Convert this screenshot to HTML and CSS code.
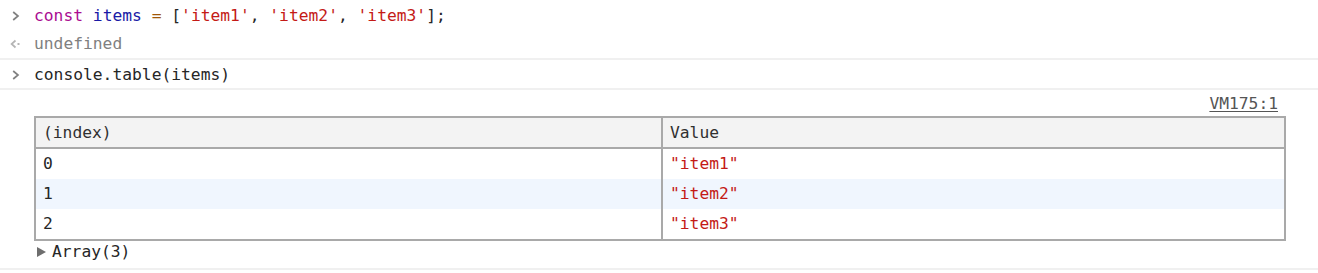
FILE: index.html
```html
<!DOCTYPE html>
<html>
<head>
<meta charset="utf-8">
<link rel="stylesheet" href="styles.css">
</head>
<body>
<div class="console">
  <div class="msg cmd first">
    <span class="gutter"><svg class="prompt" width="8" height="10" viewBox="0 0 8 10"><path d="M1.2 1 L6 5 L1.2 9" fill="none" stroke="#808080" stroke-width="1.7"/></svg></span>
    <span class="code"><span class="kw">const</span> <span class="var">items</span> <span class="op">=</span> [<span class="str">'item1'</span>, <span class="str">'item2'</span>, <span class="str">'item3'</span>];</span>
  </div>
  <div class="msg result">
    <span class="gutter"><svg class="ret" width="12" height="10" viewBox="0 0 12 10"><path d="M5.5 1.5 L1.6 5 L5.5 8.5" fill="none" stroke="#b5b5b5" stroke-width="1.7"/><rect x="7.5" y="4" width="2" height="2" fill="#b5b5b5"/></svg></span>
    <span class="code undef">undefined</span>
  </div>
  <div class="msg cmd second">
    <span class="gutter"><svg class="prompt" width="8" height="10" viewBox="0 0 8 10"><path d="M1.2 1 L6 5 L1.2 9" fill="none" stroke="#808080" stroke-width="1.7"/></svg></span>
    <span class="code">console.table(items)</span>
  </div>
  <div class="msg output">
    <div class="source"><span class="link">VM175:1</span></div>
    <table class="ctable">
      <colgroup><col class="c-index"><col class="c-value"></colgroup>
      <thead>
        <tr><th>(index)</th><th class="sep">Value</th></tr>
      </thead>
      <tbody>
        <tr><td>0</td><td class="sep str">"item1"</td></tr>
        <tr class="hl"><td>1</td><td class="sep str">"item2"</td></tr>
        <tr><td>2</td><td class="sep str">"item3"</td></tr>
      </tbody>
    </table>
    <div class="arr"><span class="tri"></span><span>Array(3)</span></div>
  </div>
</div>
</body>
</html>
```

FILE: styles.css
```css
html, body {
  margin: 0;
  padding: 0;
  background: #ffffff;
}

.console {
  font-family: "DejaVu Sans Mono", "Liberation Mono", monospace;
  font-size: 16.3px;
  line-height: 20px;
  color: #262626;
}

.msg {
  display: flex;
  align-items: center;
}

.gutter {
  width: 34px;
  flex: 0 0 34px;
  display: flex;
  align-items: center;
}

.prompt {
  margin-left: 12px;
}

.ret {
  margin-left: 10px;
}

.first {
  padding-top: 6px;
}

.result {
  padding-top: 8px;
  padding-bottom: 4px;
  border-bottom: 2px solid #f0f0f0;
}

.second {
  padding-top: 5px;
  padding-bottom: 3px;
  border-bottom: 2px solid #f0f0f0;
}

.kw { color: #aa0d91; }
.var { color: #1a1aa6; }
.op { color: #a0570a; }
.str { color: #c41a16; }
.undef { color: #808080; }

.output {
  display: block;
  padding: 4px 32px 6px 34px;
  border-bottom: 2px solid #f0f0f0;
}

.source {
  text-align: right;
  padding-right: 8px;
}

.link {
  color: #555555;
  text-decoration: underline;
  text-underline-offset: 2px;
}

.ctable {
  margin-top: 2px;
  width: 100%;
  border: 2px solid #a9a9a9;
  border-spacing: 0;
  table-layout: fixed;
}

.c-index { width: 625px; }

.ctable th {
  height: 29px;
  padding: 0 7px;
  background: #f3f3f3;
  border-bottom: 2px solid #a9a9a9;
  text-align: left;
  font-weight: normal;
  color: #303030;
}

.ctable td {
  height: 30px;
  padding: 0 7px;
}

.ctable .sep {
  border-left: 2px solid #a9a9a9;
}

.ctable tr.hl td {
  background: #f0f6fe;
}

.arr {
  margin-top: 1px;
  display: flex;
  align-items: center;
}

.tri {
  width: 0;
  height: 0;
  margin: 0 6px 0 3px;
  border-top: 5px solid transparent;
  border-bottom: 5px solid transparent;
  border-left: 9px solid #6e6e6e;
}
```
